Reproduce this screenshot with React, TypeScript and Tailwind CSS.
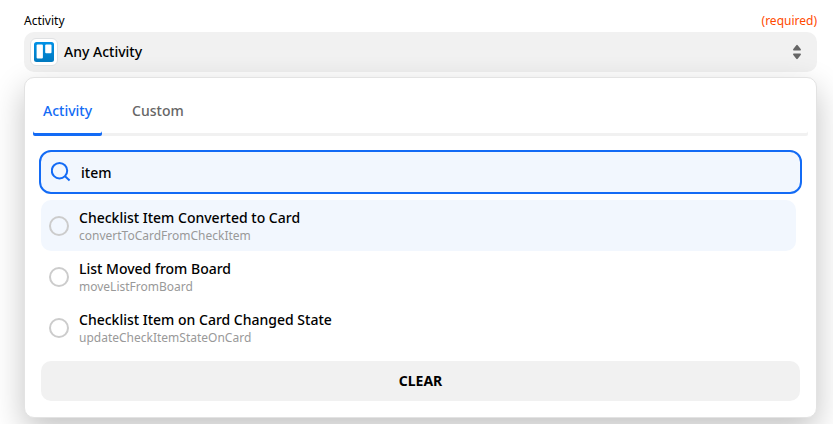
import React from "react";

type Option = { label: string; value: string };

const options: Option[] = [
  { label: "Checklist Item Converted to Card", value: "convertToCardFromCheckItem" },
  { label: "List Moved from Board", value: "moveListFromBoard" },
  { label: "Checklist Item on Card Changed State", value: "updateCheckItemStateOnCard" },
];

function TrelloLogo() {
  return (
    <svg width="20" height="20" viewBox="0 0 20 20" aria-hidden="true">
      <defs>
        <linearGradient id="trello" x1="0" y1="0" x2="0" y2="1">
          <stop offset="0" stopColor="#0091e6" />
          <stop offset="1" stopColor="#0079bf" />
        </linearGradient>
      </defs>
      <rect width="20" height="20" rx="2.5" fill="url(#trello)" />
      <rect x="2.6" y="2.6" width="6.3" height="14" rx="1" fill="#fff" />
      <rect x="11.2" y="2.6" width="6.3" height="8.6" rx="1" fill="#fff" />
    </svg>
  );
}

function SortIcon() {
  return (
    <svg width="8" height="16" viewBox="0 0 8 16" fill="#666" aria-hidden="true">
      <path d="M3.3 1.2Q4 .3 4.7 1.2L7.7 5Q8.4 6.3 7.2 6.5H.8Q-.4 6.3.3 5Z" />
      <path d="M3.3 14.8Q4 15.7 4.7 14.8L7.7 11Q8.4 9.7 7.2 9.5H.8Q-.4 9.7.3 11Z" />
    </svg>
  );
}

function SearchIcon() {
  return (
    <svg
      className="shrink-0"
      width="20"
      height="20"
      viewBox="0 0 20 20"
      fill="none"
      stroke="#136bf5"
      strokeWidth="2"
      aria-hidden="true"
    >
      <circle cx="8.5" cy="8.7" r="7.7" />
      <path d="M13.8 14L18.6 18.4" />
    </svg>
  );
}

export default function App() {
  const [query, setQuery] = React.useState("item");
  const [tab, setTab] = React.useState("Activity");
  const [selected, setSelected] = React.useState("");

  return (
    <div className="overflow-hidden pt-3 pr-4 pb-2 pl-6 font-['Noto_Sans',sans-serif] text-black">
      <div className="flex h-5 items-start justify-between text-xs leading-[18px]">
        <span id="activity-label">Activity</span>
        <span className="text-[#ff4a00]">(required)</span>
      </div>

      <button
        type="button"
        aria-labelledby="activity-label activity-value"
        className="flex h-10 w-full items-center rounded-[10px] bg-[#f1f1f1] pr-4 pl-1.5 text-sm font-medium"
      >
        <span className="flex size-7 items-center justify-center rounded-md border border-[#dfe1e3] bg-white">
          <TrelloLogo />
        </span>
        <span id="activity-value" className="ml-1.5 grow text-left">
          Any Activity
        </span>
        <SortIcon />
      </button>

      <div className="mt-[5px] rounded-[10px] border border-[#e3e3e3] bg-white p-2 pb-4 shadow-[0_12px_32px_rgba(0,0,0,0.24)]">
        <div role="tablist" className="flex gap-5 rounded-xs text-sm font-medium shadow-[inset_0_-3px_0_#f1f1f1]">
          {["Activity", "Custom"].map((name) => (
            <button
              key={name}
              type="button"
              role="tab"
              aria-selected={tab === name}
              onClick={() => setTab(name)}
              className={
                tab === name
                  ? "h-[50px] rounded-xs px-2.5 pb-px text-[#136bf5] shadow-[inset_0_-3px_0_#136bf5]"
                  : "h-[50px] rounded-xs px-2.5 pb-px text-[#666]"
              }
            >
              {name}
            </button>
          ))}
        </div>

        <label className="mx-1.5 mt-3.5 flex h-11 items-center rounded-xl border-2 border-[#136bf5] bg-[#f2f7fe] px-2.5">
          <SearchIcon />
          <input
            type="text"
            aria-label="Search activities"
            value={query}
            onChange={(e) => setQuery(e.target.value)}
            className="ml-2.5 min-w-0 grow bg-transparent pt-0.5 text-sm font-medium outline-none"
          />
        </label>

        <div className="mt-1.5 mr-3 ml-2">
          {options.map((option, idx) => (
            <label
              key={option.value}
              className={
                idx === 0
                  ? "flex h-[51px] items-center gap-2.5 rounded-[10px] bg-[#f2f7fe] px-2"
                  : "flex h-[51px] items-center gap-2.5 rounded-[10px] px-2"
              }
            >
              <input
                type="radio"
                name="activity"
                checked={selected === option.value}
                onChange={() => setSelected(option.value)}
                className="size-5 shrink-0 appearance-none rounded-full border-2 border-[#ccc] bg-transparent checked:border-[#136bf5]"
              />
              <span className="flex flex-col">
                <span className="text-sm leading-5 font-medium">{option.label}</span>
                <span className="text-xs leading-4 text-[#999]">{option.value}</span>
              </span>
            </label>
          ))}
        </div>

        <button
          type="button"
          onClick={() => setQuery("")}
          className="mx-2 mt-2 flex h-10 w-[calc(100%-16px)] items-center justify-center rounded-[10px] bg-[#f1f1f1] text-sm font-bold"
        >
          CLEAR
        </button>
      </div>
    </div>
  );
}
